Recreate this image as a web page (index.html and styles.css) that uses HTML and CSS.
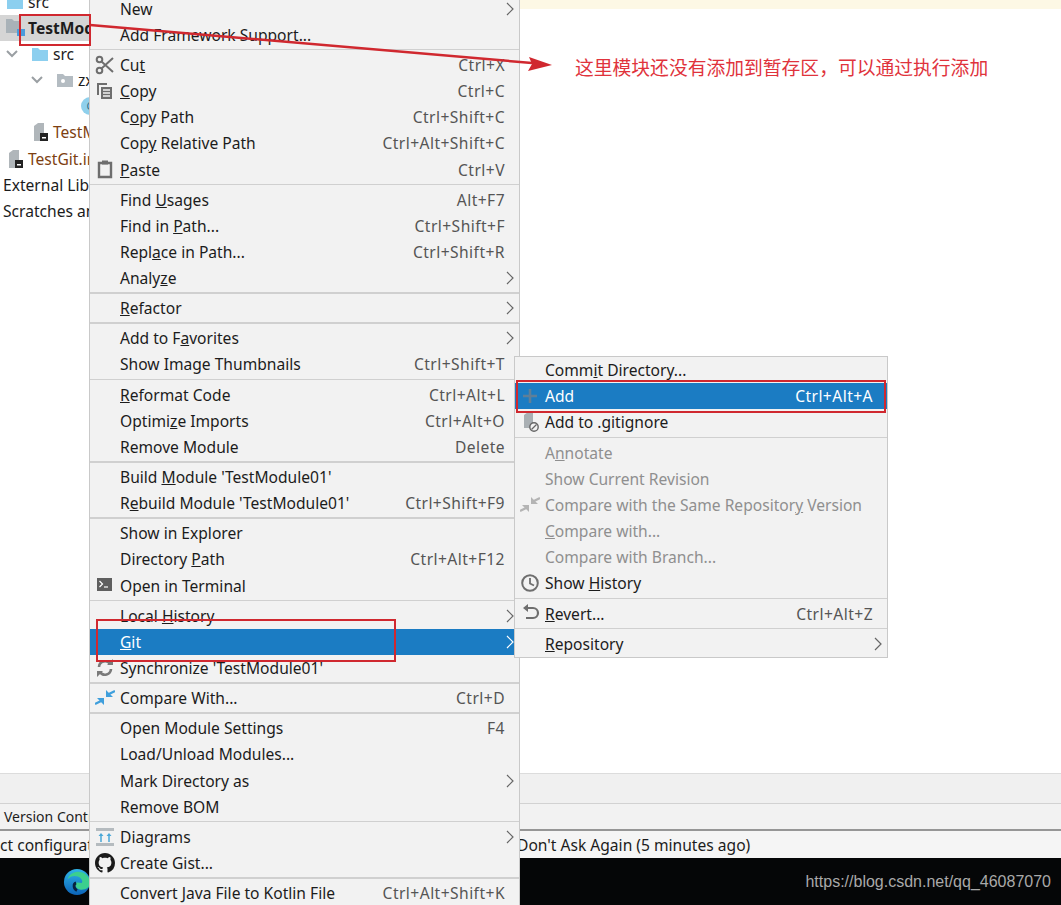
FILE: index.html
```html
<!DOCTYPE html>
<html lang="en">
<head>
    <meta charset="UTF-8">
    <title>Git add</title>
    <link rel="stylesheet" href="styles.css">
</head>
<body>
<div class="page">
    <!-- IDE behind the menus -->
    <div class="ide">
        <div class="tree">
            <div class="node lvl-1"><svg class="ico" viewBox="0 0 18 16"><path d="M1 2h6l2 2h8v11H1z" fill="#8ccfef"/></svg>src</div>
            <div class="node selected"><svg class="ico" viewBox="0 0 20 18"><path d="M0 0h6l2 2h6v12H0z" fill="#a9b2b8"/><rect x="11" y="10" width="8" height="7" fill="#4a9bdc"/></svg><b>TestModule01</b></div>
            <div class="node lvl-2"><svg class="arrow" viewBox="0 0 12 8"><path d="M1 1l5 5 5-5" fill="none" stroke="#9a9fa3" stroke-width="2"/></svg><svg class="ico" viewBox="0 0 18 16"><path d="M1 2h6l2 2h8v11H1z" fill="#8ccfef"/></svg>src</div>
            <div class="node lvl-3"><svg class="arrow" viewBox="0 0 12 8"><path d="M1 1l5 5 5-5" fill="none" stroke="#9a9fa3" stroke-width="2"/></svg><svg class="ico" viewBox="0 0 18 16"><path d="M1 2h6l2 2h8v11H1z" fill="#b4bcc2"/><circle cx="7" cy="9" r="2" fill="#fff"/></svg>zxc</div>
            <div class="node lvl-4"><span class="class-dot">C</span></div>
            <div class="node lvl-5 iml"><svg class="ico file" viewBox="0 0 14 18"><path d="M0 3l4-3h6v18H0z" fill="#b0b6ba"/><rect x="6" y="10" width="8" height="8" fill="#222"/><rect x="8" y="14" width="4" height="1.500" fill="#fff"/></svg>TestModule01.iml</div>
            <div class="node lvl-6 iml"><svg class="ico file" viewBox="0 0 14 18"><path d="M0 3l4-3h6v18H0z" fill="#b0b6ba"/><rect x="6" y="10" width="8" height="8" fill="#222"/><rect x="8" y="14" width="4" height="1.500" fill="#fff"/></svg>TestGit.iml</div>
            <div class="node plain">External Libraries</div>
            <div class="node plain">Scratches and Consoles</div>
        </div>
        <div class="editor"><div class="notice"></div></div>
    </div>
    <div class="strip"></div>
    <div class="toolbar">Version Control</div>
    <div class="status"><span class="status-left">ct configuration files can be added to Git</span><span>Don't Ask Again (5 minutes ago)</span></div>
    <div class="taskbar">
        <svg class="edge" viewBox="0 0 30 30">
            <defs>
                <linearGradient id="edgeBlue" x1="0" y1="0" x2="0" y2="1"><stop offset="0" stop-color="#2fb4e8"/><stop offset="1" stop-color="#0c63b8"/></linearGradient>
            </defs>
            <circle cx="15" cy="15" r="14" fill="url(#edgeBlue)"/>
            <path d="M29 16c0-7-6-12-13-12C10 4 6 8 5 12c3-4 10-5 14-1 2 2 2 4 1 5-2 0-4-1-6 0-2 2 0 6 4 7 5 1 11-2 11-7z" fill="#3ccf8e"/>
            <path d="M14 16c-3 1-3 6 1 8" fill="none" stroke="#08213f" stroke-width="3"/>
        </svg>
        <span class="watermark">https://blog.csdn.net/qq_46087070</span>
    </div>

    <!-- Main context menu -->
    <div class="menu main-menu">
        <div class="row"><span class="label">New</span><svg class="chev" viewBox="0 0 8 14"><path d="M1 1l6 6-6 6"/></svg></div>
        <div class="row"><span class="label">Add Framework Support...</span></div>
        <hr>
        <div class="row"><span class="slot"><svg viewBox="0 0 20 20"><g fill="none" stroke="#6e6e6e" stroke-width="2"><circle cx="4.500" cy="4.500" r="2.800"/><circle cx="4.500" cy="15.500" r="2.800"/><path d="M6.500 6.500L18 17M6.500 13.500L18 3"/></g></svg></span><span class="label">Cu<u>t</u></span><span class="keys">Ctrl+X</span></div>
        <div class="row"><span class="slot"><svg viewBox="0 0 20 20"><path d="M2 2h10v2H4v10H2z" fill="#6e6e6e"/><path d="M6 6h11v12H6z" fill="#6e6e6e"/><path d="M8 9h7M8 12h7M8 15h7" stroke="#f2f2f2" stroke-width="1.300"/></svg></span><span class="label"><u>C</u>opy</span><span class="keys">Ctrl+C</span></div>
        <div class="row"><span class="label">C<u>o</u>py Path</span><span class="keys">Ctrl+Shift+C</span></div>
        <div class="row"><span class="label">Cop<u>y</u> Relative Path</span><span class="keys">Ctrl+Alt+Shift+C</span></div>
        <div class="row"><span class="slot"><svg viewBox="0 0 20 20"><path d="M4 4h12v14H4z" fill="none" stroke="#6e6e6e" stroke-width="2.400"/><rect x="7" y="1.500" width="6" height="4" fill="#6e6e6e"/></svg></span><span class="label"><u>P</u>aste</span><span class="keys">Ctrl+V</span></div>
        <hr>
        <div class="row"><span class="label">Find <u>U</u>sages</span><span class="keys">Alt+F7</span></div>
        <div class="row"><span class="label">Find in <u>P</u>ath...</span><span class="keys">Ctrl+Shift+F</span></div>
        <div class="row"><span class="label">Repl<u>a</u>ce in Path...</span><span class="keys">Ctrl+Shift+R</span></div>
        <div class="row"><span class="label">Analy<u>z</u>e</span><svg class="chev" viewBox="0 0 8 14"><path d="M1 1l6 6-6 6"/></svg></div>
        <hr>
        <div class="row"><span class="label"><u>R</u>efactor</span><svg class="chev" viewBox="0 0 8 14"><path d="M1 1l6 6-6 6"/></svg></div>
        <hr>
        <div class="row"><span class="label">Add to F<u>a</u>vorites</span><svg class="chev" viewBox="0 0 8 14"><path d="M1 1l6 6-6 6"/></svg></div>
        <div class="row"><span class="label">Show Image Thumbnails</span><span class="keys">Ctrl+Shift+T</span></div>
        <hr>
        <div class="row"><span class="label"><u>R</u>eformat Code</span><span class="keys">Ctrl+Alt+L</span></div>
        <div class="row"><span class="label">Optimi<u>z</u>e Imports</span><span class="keys">Ctrl+Alt+O</span></div>
        <div class="row"><span class="label">Remove Module</span><span class="keys">Delete</span></div>
        <hr>
        <div class="row"><span class="label">Build <u>M</u>odule 'TestModule01'</span></div>
        <div class="row"><span class="label">R<u>e</u>build Module 'TestModule01'</span><span class="keys">Ctrl+Shift+F9</span></div>
        <hr>
        <div class="row"><span class="label">Show in Explorer</span></div>
        <div class="row"><span class="label">Directory <u>P</u>ath</span><span class="keys">Ctrl+Alt+F12</span></div>
        <div class="row"><span class="slot"><svg viewBox="0 0 20 20"><rect x="2" y="3" width="15" height="13" fill="#5f5f5f"/><path d="M4.500 6l3 3-3 3" fill="none" stroke="#fff" stroke-width="1.200"/><path d="M9 12h4" stroke="#fff" stroke-width="1.200"/></svg></span><span class="label">Open in Terminal</span></div>
        <hr>
        <div class="row"><span class="label">Local <u>H</u>istory</span><svg class="chev" viewBox="0 0 8 14"><path d="M1 1l6 6-6 6"/></svg></div>
        <div class="row active"><span class="label"><u>G</u>it</span><svg class="chev" viewBox="0 0 8 14"><path d="M1 1l6 6-6 6"/></svg></div>
        <div class="row"><span class="slot"><svg viewBox="0 0 20 20"><g fill="none" stroke="#7a7a7a" stroke-width="2.600"><path d="M4 9a6 6 0 0 1 11-3"/><path d="M16 11a6 6 0 0 1-11 3"/></g><path d="M12 7h6V1zM8 13H2v6z" fill="#7a7a7a"/></svg></span><span class="label">Synchronize 'TestModule01'</span></div>
        <hr>
        <div class="row"><span class="slot"><svg viewBox="0 0 20 20"><path d="M11 9V2l7 7zM9 10v7l-7-7z" fill="#3f9fdc"/><path d="M14 6l6-3M6 13l-6 3" stroke="#3f9fdc" stroke-width="2.400"/></svg></span><span class="label">Compare With...</span><span class="keys">Ctrl+D</span></div>
        <hr>
        <div class="row"><span class="label">Open Module Settings</span><span class="keys">F4</span></div>
        <div class="row"><span class="label">Load/Unload Modules...</span></div>
        <div class="row"><span class="label">Mark Directory as</span><svg class="chev" viewBox="0 0 8 14"><path d="M1 1l6 6-6 6"/></svg></div>
        <div class="row"><span class="label">Remove BOM</span></div>
        <hr>
        <div class="row"><span class="slot"><svg viewBox="0 0 20 20"><path d="M1 1h18v3H1zM1 16h18v3H1z" fill="#b5bbbf"/><g fill="none" stroke="#4aa8d8" stroke-width="1.500"><path d="M6 15V8M14 15V8"/></g><path d="M3.500 9L6 6l2.500 3zM11.500 9L14 6l2.500 3z" fill="#4aa8d8"/></svg></span><span class="label">Diagrams</span><svg class="chev" viewBox="0 0 8 14"><path d="M1 1l6 6-6 6"/></svg></div>
        <div class="row"><span class="slot"><svg viewBox="0 0 16 16"><path fill="#1b1b1b" d="M8 0C3.580 0 0 3.580 0 8c0 3.540 2.290 6.530 5.470 7.590.4.070.55-.17.55-.38 0-.19-.01-.82-.01-1.490-2.010.37-2.530-.49-2.690-.94-.09-.23-.48-.94-.82-1.130-.28-.15-.68-.52-.01-.53.63-.01 1.080.58 1.230.82.720 1.210 1.870.87 2.330.66.070-.52.280-.87.510-1.070-1.780-.2-3.640-.89-3.640-3.950 0-.87.310-1.590.820-2.150-.08-.2-.36-1.020.08-2.120 0 0 .67-.21 2.200.82.640-.18 1.320-.27 2-.27s1.360.09 2 .27c1.530-1.040 2.200-.82 2.200-.82.440 1.100.16 1.920.08 2.120.51.560.82 1.270.82 2.150 0 3.070-1.870 3.750-3.650 3.950.29.25.54.730.54 1.480 0 1.070-.01 1.930-.01 2.200 0 .21.150.46.550.38A8.010 8.010 0 0 0 16 8c0-4.420-3.580-8-8-8z"/></svg></span><span class="label">Create Gist...</span></div>
        <hr>
        <div class="row"><span class="label">Convert Java File to Kotlin File</span><span class="keys">Ctrl+Alt+Shift+K</span></div>
    </div>

    <!-- Git submenu -->
    <div class="menu sub-menu">
        <div class="row"><span class="label">Comm<u>i</u>t Directory...</span></div>
        <div class="row active"><span class="slot"><svg viewBox="0 0 20 20"><path d="M10 3v14M3 10h14" stroke="#5f7f98" stroke-width="2.600"/></svg></span><span class="label">Add</span><span class="keys">Ctrl+Alt+A</span></div>
        <div class="row"><span class="slot"><svg viewBox="0 0 20 20"><path d="M4 3l4-3h5v16H4z" fill="#a9afb3"/><circle cx="14" cy="15" r="4.200" fill="#f2f2f2" stroke="#666" stroke-width="1.400"/><path d="M11.500 17.500l5-5" stroke="#666" stroke-width="1.300"/></svg></span><span class="label">Add to .gitignore</span></div>
        <hr>
        <div class="row off"><span class="label">A<u>n</u>notate</span></div>
        <div class="row off"><span class="label">Show Current Revision</span></div>
        <div class="row off"><span class="slot"><svg viewBox="0 0 20 20"><path d="M11 9V2l7 7zM9 10v7l-7-7z" fill="#b4b4b4"/><path d="M14 6l6-3M6 13l-6 3" stroke="#b4b4b4" stroke-width="2.400"/></svg></span><span class="label">Compare with the Same Repositor<u>y</u> Version</span></div>
        <div class="row off"><span class="label"><u>C</u>ompare with...</span></div>
        <div class="row off"><span class="label">Compare with Branch...</span></div>
        <div class="row"><span class="slot"><svg viewBox="0 0 20 20"><circle cx="10" cy="10" r="7.800" fill="none" stroke="#6e6e6e" stroke-width="2"/><path d="M10 5v5.500l4 2" fill="none" stroke="#6e6e6e" stroke-width="1.800"/></svg></span><span class="label">Show <u>H</u>istory</span></div>
        <hr>
        <div class="row"><span class="slot"><svg viewBox="0 0 20 20"><path d="M5 5h8a4.500 4.500 0 0 1 0 10H6" fill="none" stroke="#6e6e6e" stroke-width="2.200"/><path d="M8 1L3 5l5 4z" fill="#6e6e6e"/></svg></span><span class="label"><u>R</u>evert...</span><span class="keys">Ctrl+Alt+Z</span></div>
        <hr>
        <div class="row"><span class="label"><u>R</u>epository</span><svg class="chev" viewBox="0 0 8 14"><path d="M1 1l6 6-6 6"/></svg></div>
    </div>

    <!-- Red annotations drawn on top of the screenshot -->
    <svg class="marks" viewBox="0 0 1061 905">
        <g fill="none" stroke="#d0282f" stroke-width="2">
            <rect x="20" y="15" width="70" height="30"/>
            <rect x="97" y="620" width="298" height="41"/>
            <rect x="517" y="381" width="368" height="31"/>
        </g>
        <path d="M90 25L532 63" stroke="#d0282f" stroke-width="2.500"/>
        <path d="M529 57L552 65L528 71L532 64z" fill="#d0282f"/>
    </svg>
    <div class="note">这里模块还没有添加到暂存区，可以通过执行添加</div>
</div>
</body>
</html>
```

FILE: styles.css
```css
* {
    margin: 0;
    padding: 0;
    box-sizing: border-box;
}

body {
    background: #fff;
    font-family: 'Noto Sans', 'Open Sans', sans-serif;
    font-size: 15.6px;
    color: #1c1c1c;
}

.page {
    position: relative;
    width: 1061px;
    height: 905px;
    overflow: hidden;
    display: flex;
    flex-direction: column;
}

/* ===== IDE BACKGROUND ===== */
.ide {
    flex: 1;
    display: flex;
    min-height: 0;
    border-bottom: 1px solid #dcdcdc;
}

.tree {
    width: 520px;
    margin-top: -11.5px;
    flex-shrink: 0;
}

.node {
    height: 26.2px;
    display: flex;
    align-items: center;
    white-space: nowrap;
}

.node .ico {
    width: 18px;
    height: 16px;
    margin-right: 4px;
    flex-shrink: 0;
}

.node .ico.file {
    width: 14px;
    height: 18px;
    margin-right: 5px;
}

.node .arrow {
    width: 12px;
    height: 8px;
    flex-shrink: 0;
}

.lvl-1 { padding-left: 6px; }
.lvl-2 { padding-left: 6px; }
.lvl-2 .arrow { margin-right: 13px; }
.lvl-3 { padding-left: 31px; }
.lvl-3 .arrow { margin-right: 13px; }
.lvl-4 { padding-left: 81px; }
.lvl-5 { padding-left: 34px; }
.lvl-6 { padding-left: 9px; }
.plain { padding-left: 3px; }
.iml { color: #7d3f12; }

.selected {
    height: 26px;
    background: #d5d5d5;
    padding-left: 6px;
}

.selected .ico {
    width: 20px;
    height: 18px;
    margin-right: 2px;
}

.class-dot {
    width: 18px;
    height: 18px;
    border-radius: 50%;
    background: #8fd0ec;
    color: #35708c;
    font-size: 11px;
    text-align: center;
    line-height: 18px;
}

.editor {
    flex: 1;
}

.notice {
    height: 9px;
    background: #fdf8e5;
}

.strip {
    height: 30px;
    background: #f0f0f0;
    border-bottom: 1px solid #d2d2d2;
    flex-shrink: 0;
}

.toolbar {
    height: 27px;
    padding-left: 4px;
    background: #f2f2f2;
    border-bottom: 2px solid #969696;
    font-size: 14px;
    line-height: 26px;
    flex-shrink: 0;
}

.status {
    height: 27px;
    display: flex;
    background: #f5f5f5;
    line-height: 28px;
    white-space: nowrap;
    flex-shrink: 0;
}

.status-left {
    width: 517px;
    overflow: hidden;
}

.taskbar {
    height: 47px;
    background: #050607;
    display: flex;
    align-items: center;
    justify-content: space-between;
    padding: 0 10px 0 63px;
    flex-shrink: 0;
}

.edge {
    width: 28px;
    height: 28px;
}

.watermark {
    font-family: 'Liberation Sans', Arial, sans-serif;
    font-size: 16px;
    color: #a9a9a9;
}

/* ===== MENUS ===== */
.menu {
    position: absolute;
    background: #f2f2f2;
    border: 1px solid #c9c9c9;
}

.main-menu {
    left: 89px;
    top: -5.6px;
    width: 431px;
    height: 930px;
}

.sub-menu {
    left: 514px;
    top: 356px;
    width: 374px;
}

.row {
    height: 26.2px;
    display: flex;
    align-items: center;
    padding: 0 14px 0 30px;
    position: relative;
    white-space: nowrap;
}

.label {
    flex: 1;
}

.keys {
    color: #555;
    letter-spacing: 0.45px;
}

.slot {
    position: absolute;
    left: 5px;
    top: 3px;
    width: 20px;
    height: 20px;
}

.slot svg {
    display: block;
    width: 20px;
    height: 20px;
}

.chev {
    width: 8px;
    height: 14px;
    margin-right: -9px;
    fill: none;
    stroke: #666;
    stroke-width: 1.2;
}

hr {
    border: none;
    height: 1.5px;
    margin: 1.2px 0 1.2px;
    background: #d0d0d0;
}

.active {
    background: #1b7cc3;
    color: #fff;
}

.active .keys {
    color: #fff;
}

.active .chev {
    stroke: #fff;
}

.off {
    color: #8f8f8f;
}

/* ===== ANNOTATIONS ===== */
.marks {
    position: absolute;
    left: 0;
    top: 0;
    width: 1061px;
    height: 905px;
    pointer-events: none;
}

.note {
    position: absolute;
    left: 575px;
    top: 53px;
    font-family: 'Noto Sans CJK SC', sans-serif;
    font-size: 18.8px;
    line-height: 28px;
    color: #e0333c;
    white-space: nowrap;
}
```
